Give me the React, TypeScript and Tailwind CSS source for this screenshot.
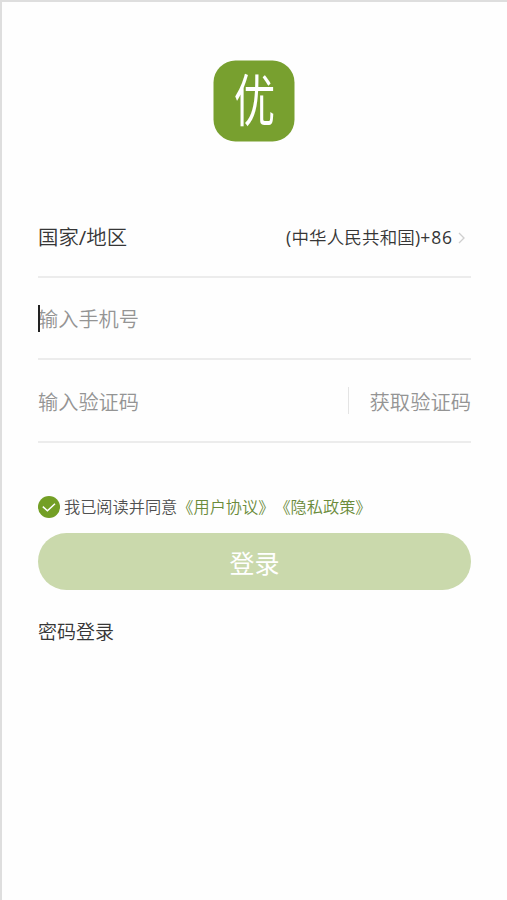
import React, { useState } from 'react';

function Logo() {
    return (
        <svg width="82" height="82" viewBox="0 0 82 82" role="img" aria-label="优" className="overflow-visible">
            <rect x="0.5" y="0.5" width="81" height="81" rx="22" fill="#78a02f" />
            <text
                transform="translate(41.5 60.5) scale(0.74 1)"
                textAnchor="middle"
                fontSize="56"
                fill="#fff"
                className="font-['Noto_Sans_CJK_SC',sans-serif] font-normal"
            >
                优
            </text>
        </svg>
    );
}

export default function App() {
    const [phone, setPhone] = useState('');
    const [code, setCode] = useState('');

    return (
        <div className="h-[900px] w-[507px] overflow-hidden border-l-2 border-t-2 border-[#dedede] bg-[#fefefe] pl-9 pr-9 font-['Open_Sans','Noto_Sans_CJK_SC',sans-serif] font-[350] text-[#363636]">
            {/* Logo */}
            <div className="-ml-0.5 flex justify-center pt-[58px]">
                <Logo />
            </div>

            {/* Form */}
            <div className="mt-[57px]">
                <div className="flex h-[79px] items-center justify-between border-b-2 border-[#ececec]">
                    <span className="text-[20.4px] leading-none">
                        国家<span className="font-normal">/</span>地区
                    </span>
                    <button className="flex items-center text-[17.5px] leading-none">
                        <span className="tracking-[0.15px]">
                            <span className="font-normal">(</span>中华人民共和国<span className="font-normal">)</span>
                        </span>
                        <span className="font-normal tracking-[0.9px]">+86</span>
                        <svg width="7" height="12" viewBox="0 0 7 12" className="ml-[5px] mr-1.5" fill="none" stroke="#cfcfcf" strokeWidth="1.3">
                            <path d="M1 1l5 5-5 5" />
                        </svg>
                    </button>
                </div>

                <div className="relative flex h-[82px] items-center border-b-2 border-[#ececec] pt-[3px]">
                    <span className="absolute left-0 top-[27px] h-[27px] w-[1.5px] bg-[#222]" />
                    <input
                        type="tel"
                        value={phone}
                        onChange={(e) => setPhone(e.target.value)}
                        placeholder="输入手机号"
                        className="w-full text-[20.2px] outline-none placeholder:text-[#949494]"
                    />
                </div>

                <div className="flex h-[83px] items-center border-b-2 border-[#ececec] pt-[3px]">
                    <input
                        type="text"
                        value={code}
                        onChange={(e) => setCode(e.target.value)}
                        placeholder="输入验证码"
                        className="min-w-0 flex-1 text-[20.2px] outline-none placeholder:text-[#949494]"
                    />
                    <button className="-mt-[3px] flex items-center text-[20.3px] leading-none text-[#949494]">
                        <span className="mr-[21px] h-[27px] w-px bg-[#e4e4e4]" />
                        <span className="pt-[3px]">获取验证码</span>
                    </button>
                </div>
            </div>

            {/* Agreement */}
            <div className="mt-[52px] flex h-[23px] items-center text-[16.2px] leading-none">
                <svg width="22" height="22" viewBox="0 0 22 22" className="mr-1 shrink-0">
                    <circle cx="11" cy="11" r="11" fill="#739f25" />
                    <path d="M4.8 10.6l4.6 4.2 7.6-7" fill="none" stroke="#fff" strokeWidth="1.5" />
                </svg>
                <span className="whitespace-nowrap pt-0.5 text-[#505050] [text-spacing-trim:space-all]">
                    我已阅读并同意
                    <a className="text-[#6b8b3b]">《用户协议》</a>
                    <a className="text-[#6b8b3b]">《隐私政策》</a>
                </span>
            </div>

            <button className="mt-[15px] flex h-[57px] w-full items-center justify-center rounded-full bg-[#cad9ac] pt-[3px] text-[25px] leading-none font-normal text-white">
                登录
            </button>

            <button className="mt-[33px] block text-[19px] leading-none">密码登录</button>
        </div>
    );
}
